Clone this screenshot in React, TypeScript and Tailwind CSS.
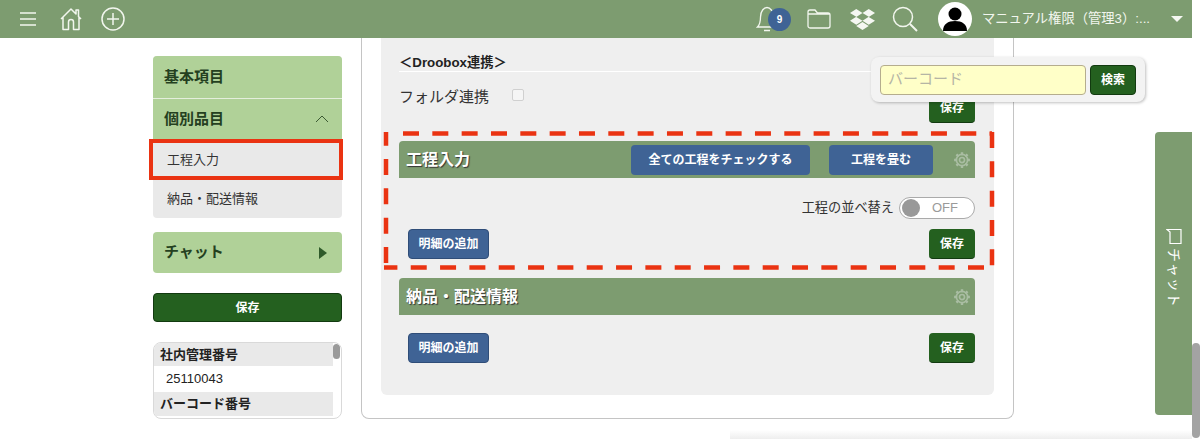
import React from "react";
import { FaDropbox } from "react-icons/fa";

const FONT = "font-['Liberation_Sans','Noto_Sans_CJK_JP',sans-serif]";

function BlueButton({ label, className = "" }: { label: string; className?: string }) {
  return (
    <button className={`h-[30px] rounded-[4px] bg-[#3f6395] text-white text-[12px] font-bold flex items-center justify-center ${className}`}>
      {label}
    </button>
  );
}

function SaveButton() {
  return (
    <button className="w-[46px] h-[30px] rounded-[4px] bg-[#24601f] border-b border-[#123a10] text-white text-[12px] font-bold flex items-center justify-center">
      保存
    </button>
  );
}

function Gear() {
  return (
    <svg width="18" height="18" viewBox="0 0 24 24" fill="none" stroke="#a9bda2" strokeWidth="2.2">
      <circle cx="12" cy="12" r="3.4" />
      <path d="M12 1.500v4M12 18.500v4M1.500 12h4M18.500 12h4M4.600 4.600l2.800 2.800M16.600 16.600l2.800 2.800M4.600 19.400l2.800-2.800M16.600 7.400l2.800-2.800" strokeWidth="3.200" />
      <circle cx="12" cy="12" r="7.500" />
    </svg>
  );
}

function SectionHeader({ title, children }: { title: string; children?: React.ReactNode }) {
  return (
    <div className="h-[37px] rounded-t-[4px] bg-[#7d9c70] flex items-center pl-[7px] pr-[4px]">
      <span className="text-[16px] font-bold text-white [text-shadow:1px_1px_1px_#333] grow">{title}</span>
      {children}
      <span className="ml-[20px] w-[18px] flex"><Gear /></span>
    </div>
  );
}

function Header() {
  return (
    <header className="h-[38px] mr-[8px] bg-[#7d9c70] flex items-center shrink-0 text-white">
      <svg className="ml-[19px]" width="18" height="16" viewBox="0 0 18 16" stroke="#f2f6ee" strokeWidth="1.4">
        <path d="M1 2h16M1 8h16M1 14h16" />
      </svg>
      <svg className="ml-[23px]" width="22" height="24" viewBox="0 0 22 24" fill="none" stroke="#f2f6ee" strokeWidth="1.5" strokeLinejoin="round">
        <path d="M1 12 11 2l5 5V3h2.500v6.500L21 12M3 10.500V22.500h5.500V15a2.500 2.500 0 0 1 5 0v7.500H19V10.500" />
      </svg>
      <svg className="ml-[19px]" width="24" height="24" viewBox="0 0 24 24" fill="none" stroke="#f2f6ee" strokeWidth="1.5">
        <circle cx="12" cy="12" r="11" />
        <path d="M12 6v12M6 12h12" />
      </svg>
      <div className="grow" />
      <div className="relative w-[36px] h-[30px] mr-[15px]">
        <svg className="absolute left-0 top-[2px]" width="22" height="26" viewBox="0 0 22 26" fill="none" stroke="#f2f6ee" strokeWidth="1.3">
          <path d="M1.500 21c2-2 3-5 3-10 0-6 3.500-9.500 6.500-9.500s6.500 3.500 6.500 9.500c0 5 1 8 3 10zM8 24.500h6" />
        </svg>
        <span className="absolute left-[12px] top-[4px] w-[23px] h-[23px] rounded-full bg-[#3f6395] text-[10px] font-bold flex items-center justify-center">9</span>
      </div>
      <svg className="mr-[19px]" width="24" height="20" viewBox="0 0 24 20" fill="none" stroke="#f2f6ee" strokeWidth="1.3">
        <path d="M1 5V3a2 2 0 0 1 2-2h5l2.500 3H21a2 2 0 0 1 2 2v11a2 2 0 0 1-2 2H3a2 2 0 0 1-2-2V5h22" />
      </svg>
      <FaDropbox className="mr-[17px] text-[25px] text-[#f5f7f2]" />
      <svg className="mr-[20px]" width="26" height="26" viewBox="0 0 26 26" fill="none" stroke="#f2f6ee" strokeWidth="1.5">
        <circle cx="11" cy="11" r="9.500" />
        <path d="m18 18 7 7" strokeWidth="2" />
      </svg>
      <svg className="mr-[10px]" width="34" height="34" viewBox="0 0 34 34">
        <circle cx="17" cy="17" r="17" fill="#fff" />
        <circle cx="17" cy="12" r="6.500" fill="#000" />
        <path d="M5 29c0-7 5-10 12-10s12 3 12 10z" fill="#000" />
      </svg>
      <span className="text-[13.3px] text-[#f2f6ee] w-[189px] whitespace-nowrap overflow-hidden">マニュアル権限（管理3）:...</span>
      <span className="mr-[9px] w-0 h-0 border-x-[6px] border-x-transparent border-t-[6px] border-t-[#f5f7f2]" />
    </header>
  );
}

function Sidebar() {
  return (
    <aside className="w-[189px] ml-[153px] mt-[18px] shrink-0 flex flex-col text-[#222]">
      <div className="rounded-[4px] overflow-hidden bg-[#e9e9e9]">
        <div className="h-[43px] bg-[#b0d198] border-b border-[#e4eedc] flex items-center px-[11px] text-[15px] font-bold text-[#24401f]">基本項目</div>
        <div className="h-[40px] bg-[#b0d198] flex items-center justify-between px-[11px] text-[15px] font-bold text-[#24401f]">
          個別品目
          <svg className="mr-[2px]" width="14" height="8" viewBox="0 0 14 8" fill="none" stroke="#3c5a33" strokeWidth="1">
            <path d="m1 7 6-6 6 6" />
          </svg>
        </div>
        <div className="h-[41px] flex items-center px-[14px] text-[13px] text-[#333]">工程入力</div>
        <div className="h-[38px] flex items-center px-[14px] text-[13px] text-[#333]">納品・配送情報</div>
      </div>
      <div className="mt-[14px] h-[41px] rounded-[4px] bg-[#b0d198] flex items-center justify-between px-[11px] text-[15px] font-bold text-[#24401f]">
        チャット
        <span className="mr-[4px] w-0 h-0 border-y-[6px] border-y-transparent border-l-[8px] border-l-[#2f5a2a]" />
      </div>
      <button className="mt-[20px] h-[29px] rounded-[4px] bg-[#24601f] border border-[#123a10] text-white text-[12px] font-bold">保存</button>
      <div className="relative mt-[20px] h-[77px] rounded-[8px] border border-[#d9d9d9] overflow-hidden pr-[8px]">
        <div className="h-[23px] bg-[#e9e9e9] flex items-center pl-[6px] text-[13px] font-bold text-[#222]">社内管理番号</div>
        <div className="h-[26px] flex items-center pl-[12px] text-[13px] text-[#222]">25110043</div>
        <div className="h-[24px] bg-[#e9e9e9] flex items-center pl-[6px] text-[13px] font-bold text-[#222]">バーコード番号</div>
        <div className="absolute right-[1px] top-[1px] w-[7px] h-[15px] rounded-[4px] bg-[#9a9a9a]" />
      </div>
    </aside>
  );
}

function MainCard() {
  return (
    <main className="w-[653px] ml-[19px] h-[381px] rounded-b-[8px] border-x border-b border-[#c4c4c4] px-[19px] shrink-0">
      <div className="h-[357px] rounded-b-[6px] bg-[#efefef] pl-[18px] pr-[19px]">
        <div className="pt-[16px] h-[34px] border-b border-white text-[13.3px] font-bold text-[#222] leading-[17px]">＜Droobox連携＞</div>
        <div className="h-[69px] relative flex items-start">
          <span className="mt-[15px] text-[15px] text-[#333] leading-[20px]">フォルダ連携</span>
          <span className="mt-[17px] ml-[23px] w-[12px] h-[12px] rounded-[2px] border border-[#d0d0d0] bg-[#f5f5f5]" />
          <div className="ml-auto mt-[21px]"><SaveButton /></div>
        </div>
        <SectionHeader title="工程入力">
          <BlueButton label="全ての工程をチェックする" className="w-[179px]" />
          <BlueButton label="工程を畳む" className="w-[104px] ml-[19px]" />
        </SectionHeader>
        <div className="h-[100px] flex flex-col">
          <div className="mt-[19px] h-[22px] flex items-center justify-end">
            <span className="text-[13.2px] text-[#333] mr-[5px]">工程の並べ替え</span>
            <div className="w-[76px] h-[22px] rounded-full bg-white border border-[#aaa] relative flex items-center justify-end pr-[16px] text-[13px] text-[#9a9a9a]">
              OFF
              <span className="absolute left-[2px] top-[1px] w-[18px] h-[18px] rounded-full bg-[#999]" />
            </div>
          </div>
          <div className="mt-[10px] flex justify-between pl-[9px]">
            <BlueButton label="明細の追加" className="w-[81px] border border-[#2f4d78]" />
            <SaveButton />
          </div>
        </div>
        <SectionHeader title="納品・配送情報" />
        <div className="mt-[18px] flex justify-between pl-[9px]">
          <BlueButton label="明細の追加" className="w-[81px] border border-[#2f4d78]" />
          <SaveButton />
        </div>
      </div>
    </main>
  );
}

export default function App() {
  return (
    <div className={`relative w-[1200px] h-[439px] overflow-hidden bg-white flex flex-col ${FONT}`}>
      <Header />
      <div className="flex">
        <Sidebar />
        <MainCard />
      </div>

      {/* red annotations */}
      <div className="absolute left-[149px] top-[139px] w-[194px] h-[41px] border-[4px] border-[#ea3312] pointer-events-none" />
      <svg className="absolute left-[380px] top-[126px] pointer-events-none" width="620" height="148" fill="none" stroke="#ea3312" strokeWidth="4.500" strokeDasharray="16 13.330">
        <path d="M23 7.500H612" />
        <path d="M612 6V141" />
        <path d="M604 141.500H4" />
        <path d="M6 137V6" />
      </svg>

      {/* barcode search */}
      <div className="absolute left-[871px] top-[57px] w-[274px] h-[45px] rounded-[8px] bg-[#f3f3f3] shadow-[1px_1px_3px_rgba(0,0,0,0.25)] flex items-center pl-[9px] gap-[4px]">
        <div className="w-[206px] h-[30px] rounded-[4px] bg-[#ffffc8] border border-[#b5ad8e] flex items-center pl-[7px] text-[15px] text-[#b5b5a5]">バーコード</div>
        <button className="w-[46px] h-[30px] rounded-[4px] bg-[#24601f] border border-[#123a10] text-white text-[12px] font-bold">検索</button>
      </div>

      {/* chat tab */}
      <div className="absolute left-[1155px] top-[132px] w-[37px] h-[283px] rounded-l-[4px] bg-[#7d9c70] flex flex-col items-center pt-[96px] gap-[3px] text-white">
        <svg width="16" height="17" viewBox="0 0 16 17" fill="none" stroke="#fff" strokeWidth="1.200">
          <path d="M1 1.500 4 4V15.500H15V1.500z" />
        </svg>
        <span className="[writing-mode:vertical-rl] [text-orientation:sideways] text-[14px] tracking-[1px]">チャット</span>
      </div>

      {/* page scrollbar */}
      <div className="absolute right-0 top-[343px] w-[8px] h-[95px] rounded-[4px] bg-[#a3a3a3]" />
      <div className="absolute left-[730px] right-[8px] bottom-0 h-[9px] bg-gradient-to-b from-white to-[#eeeeee]" />
    </div>
  );
}
